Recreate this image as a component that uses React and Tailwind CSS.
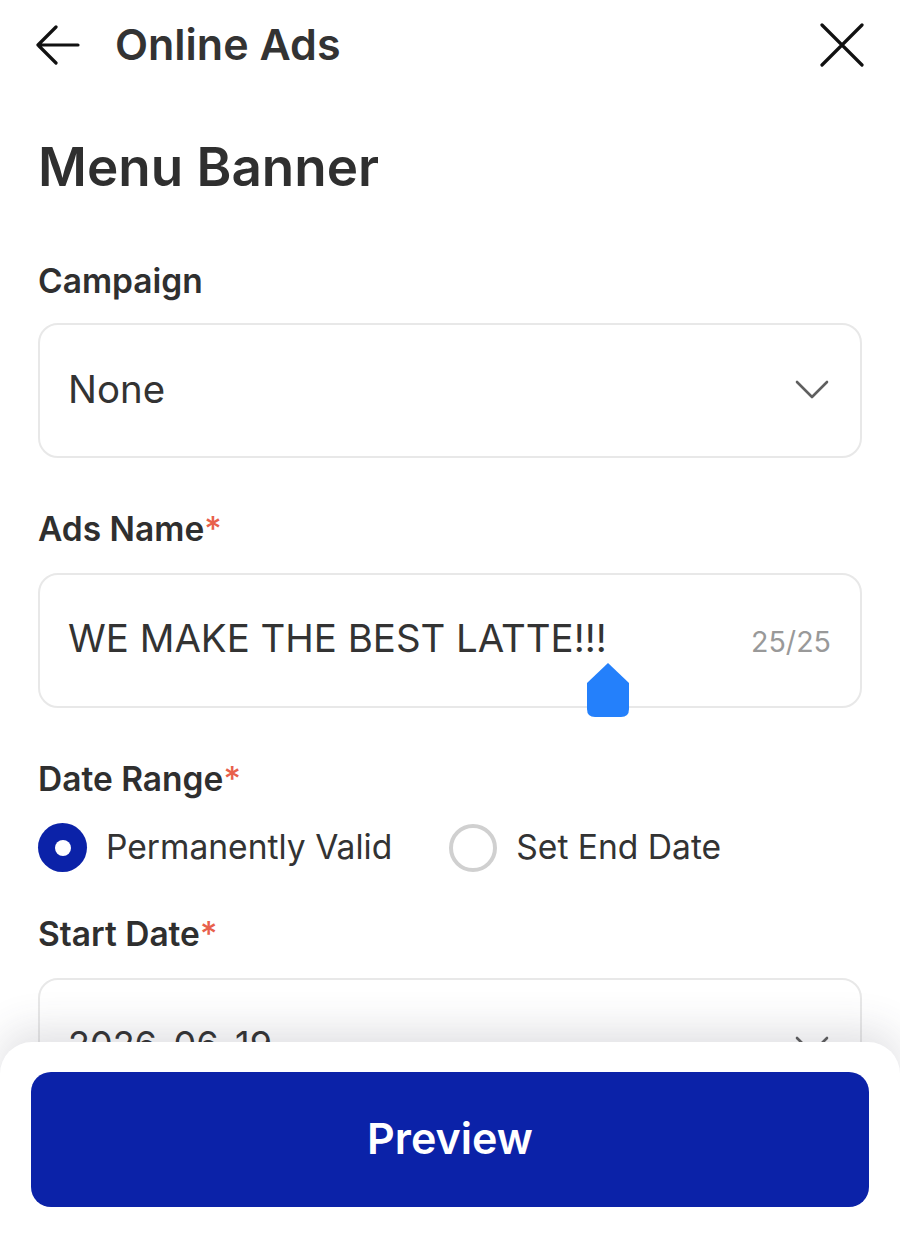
import React from "react";

const Label = ({ children, required, className = "" }) => (
  <div className={`text-[33.5px] leading-[38px] pb-[2px] font-semibold text-[#2f2f2f] ${className}`}>
    {children}
    {required && <span className="text-[#e8604c] font-medium">*</span>}
  </div>
);

const Chevron = ({ className = "" }) => (
  <svg viewBox="0 0 34 20" className={`w-[34px] h-[20px] mr-[2px] ${className}`} fill="none" stroke="#5f5f5f" strokeWidth="2.6" strokeLinecap="round" strokeLinejoin="round">
    <path d="M2 2 L17 17 L32 2" />
  </svg>
);

const Field = ({ children, className = "" }) => (
  <div className={`h-[135px] w-[824px] rounded-[20px] border-2 border-[#e8e8e8] flex items-center justify-between pl-[28px] pr-[29px] ${className}`}>
    {children}
  </div>
);

const Radio = ({ checked, label }) => (
  <div className="flex items-center gap-[19px]">
    {checked ? (
      <div className="w-[49px] h-[49px] rounded-full bg-[#0b22a8] flex items-center justify-center">
        <div className="w-[16px] h-[16px] rounded-full bg-white" />
      </div>
    ) : (
      <div className="w-[48px] h-[48px] rounded-full border-[4px] border-[#d0d0d0]" />
    )}
    <span className="text-[33.6px] leading-[44px] text-[#333333] -mt-[2px]">{label}</span>
  </div>
);

const App = () => {
  return (
    <div className="relative w-[900px] h-[1234px] overflow-hidden bg-white font-['Inter',sans-serif]">
      <div className="flex items-center justify-between pl-[36px] pr-[36px] pt-[20px] h-[70px]">
        <div className="flex items-center gap-[35px]">
          <svg viewBox="0 0 44 40" className="w-[44px] h-[40px]" fill="none" stroke="#111111" strokeWidth="3.2" strokeLinecap="round" strokeLinejoin="round">
            <path d="M42 20 H2 M20 2 L2 20 L20 38" />
          </svg>
          <h2 className="text-[43px] leading-[50px] font-semibold text-[#333333] mb-[2px]">Online Ads</h2>
        </div>
        <svg viewBox="0 0 44 44" className="w-[44px] h-[44px]" fill="none" stroke="#111111" strokeWidth="3.2" strokeLinecap="round">
          <path d="M2 2 L42 42 M42 2 L2 42" />
        </svg>
      </div>

      <div className="px-[38px]">
        <h1 className="mt-[67px] text-[53px] leading-[60px] font-semibold text-[#2f2f2f]">Menu Banner</h1>

        <Label className="mt-[65px]">Campaign</Label>
        <Field className="mt-[21px]">
          <span className="text-[38.4px] leading-[46px] text-[#333333] -mt-[3px]">None</span>
          <Chevron className="mb-[2px]" />
        </Field>

        <Label required className="mt-[52px]">Ads Name</Label>
        <Field className="mt-[23px] relative">
          <span className="text-[38.4px] leading-[46px] text-[#333333] -mt-[5px]">WE MAKE THE BEST LATTE!!!</span>
          <span className="text-[28.6px] leading-[36px] text-[#999999] mt-[3px]">25/25</span>
          <svg viewBox="0 0 42 54" className="absolute left-[547px] top-[88px] w-[42px] h-[54px]">
            <path d="M21 0 L42 20 V46 Q42 54 34 54 H8 Q0 54 0 46 V20 Z" fill="#2480fb" />
          </svg>
        </Field>

        <Label required className="mt-[52px]">Date Range</Label>
        <div className="mt-[23px] flex items-center gap-[57px]">
          <Radio checked label="Permanently Valid" />
          <Radio label="Set End Date" />
        </div>

        <Label required className="mt-[43px]">Start Date</Label>
        <Field className="mt-[23px]">
          <span className="text-[36px] leading-[46px] text-[#333333] -mt-[3px]">2026-06-19</span>
          <Chevron />
        </Field>
      </div>

      <div className="absolute left-0 right-0 top-[1042px] h-[192px] bg-white rounded-t-[32px] shadow-[0_-12px_40px_rgba(60,60,80,0.16)] px-[31px] pt-[30px]">
        <button className="w-[838px] h-[135px] rounded-[20px] bg-[#0b22a8] text-white text-[43px] font-semibold pb-[3px]">Preview</button>
      </div>
    </div>
  );
};

export default App;
